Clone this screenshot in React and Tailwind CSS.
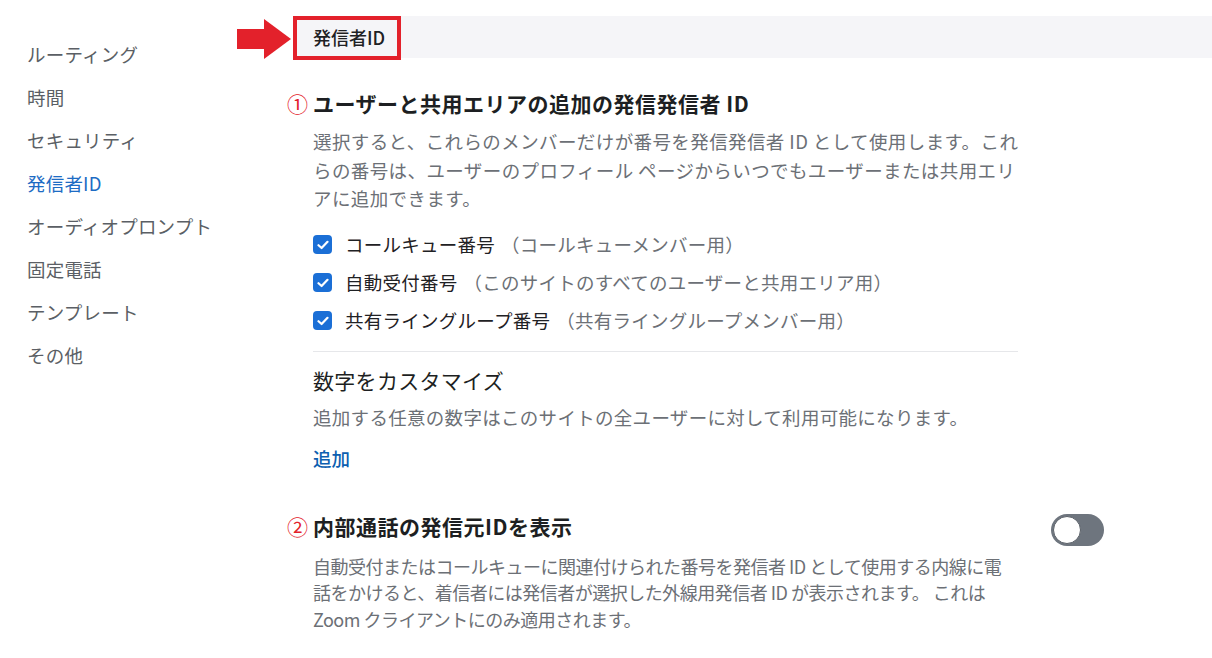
import React from 'react';

const navItems = ['ルーティング', '時間', 'セキュリティ', '発信者ID', 'オーディオプロンプト', '固定電話', 'テンプレート', 'その他'];

function CheckBox() {
  return (
    <span className="flex items-center justify-center w-[19px] h-[19px] rounded-[4px] bg-[#1b6fd6] shrink-0">
      <svg width="12" height="10" viewBox="0 0 12 10" fill="none">
        <path d="M1.5 5.2 L4.6 8 L10.5 1.8" stroke="white" strokeWidth="2.2" strokeLinecap="round" strokeLinejoin="round" />
      </svg>
    </span>
  );
}

function CheckRow({ label, note }) {
  return (
    <div className="flex items-center h-[38px] tracking-[0.25px]">
      <CheckBox />
      <span className="ml-[13px] text-[#1f2124]">{label}</span>
      <span className="ml-[6px] text-[#6c7076]">{note}</span>
    </div>
  );
}

export default function App() {
  return (
    <div
      className="flex w-[1212px] h-[658px] bg-white overflow-hidden text-[18.5px]"
      style={{ fontFamily: '"Noto Sans CJK JP", "Noto Sans", sans-serif' }}
    >
      {/* sidebar */}
      <nav className="w-[293px] shrink-0 pl-[27px] pt-[33px]">
        {navItems.map((item) => (
          <div
            key={item}
            className={`h-[43px] flex items-center tracking-[0.2px] ${item === '発信者ID' ? 'text-[#1d6cc4]' : 'text-[#5b5f65]'}`}
          >
            {item}
          </div>
        ))}
      </nav>

      {/* main */}
      <main className="flex-1 pt-[16px]">
        <div className="relative h-[42px] bg-[#f5f5f8] flex items-center pl-[20px]">
          <svg className="absolute left-[-56px] top-[3px]" width="54" height="40" viewBox="0 0 54 40">
            <rect x="0" y="10" width="28" height="20" fill="#e3212b" />
            <polygon points="27,0 54,20 27,40" fill="#e3212b" />
          </svg>
          <div className="absolute left-0 top-0 w-[108px] h-[44px] border-[4px] border-[#e3212b]" />
          <span className="text-[18px] font-medium text-[#1f2124]">発信者ID</span>
        </div>

        <section className="pl-[20px] mt-[30px]">
          <h2 className="relative text-[21px] leading-[30px] font-bold tracking-[0.5px] text-[#1d1f22]">
            <span className="absolute left-[-26px] top-0 font-normal tracking-normal text-[#e3212b]">①</span>
            ユーザーと共用エリアの追加の発信発信者 ID
          </h2>
          <p className="mt-[9px] leading-[28.5px] tracking-[0.4px] text-[#6c7076] whitespace-nowrap">
            選択すると、これらのメンバーだけが番号を発信発信者 ID として使用します。これ<br />
            らの番号は、ユーザーのプロフィール ページからいつでもユーザーまたは共用エリ<br />
            アに追加できます。
          </p>

          <div className="mt-[13px]">
            <CheckRow label="コールキュー番号" note="（コールキューメンバー用）" />
            <CheckRow label="自動受付番号" note="（このサイトのすべてのユーザーと共用エリア用）" />
            <CheckRow label="共有ライングループ番号" note="（共有ライングループメンバー用）" />
          </div>

          <div className="w-[705px] h-px bg-[#e6e7ea] mt-[11px]" />

          <h3 className="mt-[13px] text-[21px] leading-[30px] tracking-[0.3px] text-[#1d1f22]">数字をカスタマイズ</h3>
          <p className="mt-[8px] leading-[28px] tracking-[0.3px] text-[#6c7076]">
            追加する任意の数字はこのサイトの全ユーザーに対して利用可能になります。
          </p>
          <div className="mt-[13px] leading-[28px] font-medium text-[#0d5fb0]">追加</div>
        </section>

        <section className="pl-[20px] mt-[39px]">
          <div className="flex items-start justify-between w-[791px]">
            <h2 className="relative text-[21px] leading-[30px] font-bold tracking-[0.5px] text-[#1d1f22]">
              <span className="absolute left-[-26px] top-0 font-normal tracking-normal text-[#e3212b]">②</span>
              内部通話の発信元IDを表示
            </h2>
            <div className="mt-[3px] w-[53px] h-[32px] rounded-full bg-[#6e757e] flex items-center pl-[2px]">
              <span className="w-[28px] h-[28px] rounded-full bg-white border border-[#5a6068]" />
            </div>
          </div>
          <p className="mt-[7px] leading-[26.5px] text-[18px] tracking-[-0.5px] text-[#6c7076] whitespace-nowrap">
            自動受付またはコールキューに関連付けられた番号を発信者 ID として使用する内線に電<br />
            話をかけると、着信者には発信者が選択した外線用発信者 ID が表示されます。 これは<br />
            Zoom クライアントにのみ適用されます。
          </p>
        </section>
      </main>
    </div>
  );
}
